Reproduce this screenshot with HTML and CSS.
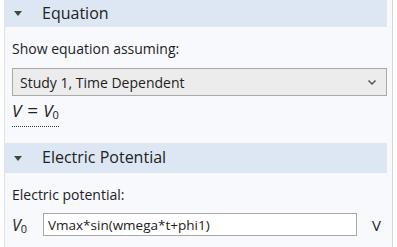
FILE: index.html
```html
<!DOCTYPE html>
<html lang="en">
<head>
  <meta charset="UTF-8">
  <title>Settings</title>
  <link rel="stylesheet" href="styles.css">
</head>
<body>
  <div class="panel">
    <div class="section-head">
      <span class="caret"></span>
      <span class="section-title">Equation</span>
    </div>
    <div class="section-body">
      <div class="label">Show equation assuming:</div>
      <div class="combo">
        <span>Study 1, Time Dependent</span>
        <svg class="chev" width="10" height="7" viewBox="0 0 10 7"><path d="M1.5 1.5 L5 5 L8.5 1.5" fill="none" stroke="#555" stroke-width="1.5"/></svg>
      </div>
      <div class="eq"><i>V</i><span class="eq-op">=</span><i>V</i><sub>0</sub></div>
    </div>

    <div class="section-head second">
      <span class="caret"></span>
      <span class="section-title">Electric Potential</span>
    </div>
    <div class="section-body">
      <div class="label">Electric potential:</div>
      <div class="field-row">
        <span class="sym"><i>V</i><sub>0</sub></span>
        <input class="field" type="text" value="Vmax*sin(wmega*t+phi1)">
        <span class="unit">V</span>
      </div>
    </div>
  </div>
</body>
</html>
```

FILE: styles.css
```css
* {
  box-sizing: border-box;
}
body {
  margin: 0;
  background-color: #ffffff;
  font-family: "Open Sans", "Noto Sans", sans-serif;
  color: #222;
}
.panel {
  margin-left: 4px;
  width: 389px;
  height: 247px;
  background-color: #f7f9fd;
  border-left: 1px solid #dfe3e8;
  border-right: 1px solid #d3d7dc;
  padding-right: 5px;
}
.section-head {
  display: flex;
  align-items: center;
  height: 27px;
  background-color: #dde7f3;
}
.section-head.second {
  height: 30px;
  margin-top: 16px;
}
.caret {
  width: 0;
  height: 0;
  margin-left: 9px;
  border-left: 4px solid transparent;
  border-right: 4px solid transparent;
  border-top: 5px solid #444;
}
.section-title {
  margin-left: 20px;
  font-size: 16px;
  color: #222;
  margin-top: -2px;
}
.section-body {
  padding: 0 0 0 7px;
}
.label {
  font-size: 14px;
  margin-top: 12px;
  line-height: 20px;
}
.combo {
  display: flex;
  align-items: center;
  justify-content: space-between;
  height: 28px;
  margin-top: 9px;
  padding: 0 9px 0 7px;
  background-color: #ececec;
  border: 1px solid #a9a9a9;
  font-size: 14px;
}
.chev {
  margin-top: 1px;
}
.eq {
  display: inline-block;
  margin-top: 3px;
  font-size: 17px;
  line-height: 22px;
  border-bottom: 1px dotted #333;
}
.eq-op {
  margin: 0 5px 0 6px;
  font-size: 19px;
}
.eq sub, .sym sub {
  font-size: 11px;
  vertical-align: -2px;
}
.field-row {
  display: flex;
  align-items: center;
  margin-top: 8px;
}
.sym {
  width: 31px;
  font-size: 16px;
}
.field {
  width: 314px;
  height: 23px;
  padding: 0 4px;
  border: 1px solid #a9a9a9;
  background-color: #fff;
  font-family: "Open Sans", "Noto Sans", sans-serif;
  font-size: 13.5px;
  color: #222;
}
.unit {
  margin-left: 15px;
  font-size: 15px;
}
```
